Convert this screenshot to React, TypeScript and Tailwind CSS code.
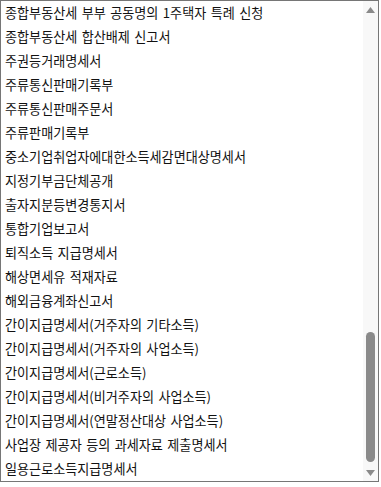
import React from 'react';

const items = [
    '종합부동산세 부부 공동명의 1주택자 특례 신청',
    '종합부동산세 합산배제 신고서',
    '주권등거래명세서',
    '주류통신판매기록부',
    '주류통신판매주문서',
    '주류판매기록부',
    '중소기업취업자에대한소득세감면대상명세서',
    '지정기부금단체공개',
    '출자지분등변경통지서',
    '통합기업보고서',
    '퇴직소득 지급명세서',
    '해상면세유 적재자료',
    '해외금융계좌신고서',
    '간이지급명세서(거주자의 기타소득)',
    '간이지급명세서(거주자의 사업소득)',
    '간이지급명세서(근로소득)',
    '간이지급명세서(비거주자의 사업소득)',
    '간이지급명세서(연말정산대상 사업소득)',
    '사업장 제공자 등의 과세자료 제출명세서',
    '일용근로소득지급명세서',
];

export default function App() {
    return (
        <div className="w-[381px] h-[487px] bg-white">
            <div
                className="w-[379px] h-[482px] border border-[#767676] flex overflow-hidden bg-white"
                style={{ fontFamily: '"Noto Sans CJK KR", "Noto Sans", sans-serif' }}
            >
                <ul className="flex-1 flex flex-col">
                    {items.map((item) => (
                        <li key={item} className="h-[24px] flex items-center px-[4px] text-[13.1px] text-[#111] [word-spacing:1.5px] whitespace-nowrap">
                            {item}
                        </li>
                    ))}
                </ul>
                {/* scrollbar */}
                <div className="w-[15px] bg-[#f8f8f8] flex flex-col items-center">
                    <div className="h-[17px] flex items-center justify-center">
                        <svg width="9" height="6" viewBox="0 0 9 6"><path d="M4.5 0L9 6H0z" fill="#8a8a8a" /></svg>
                    </div>
                    <div className="flex-1 w-full flex flex-col items-center">
                        <div className="mt-auto mb-[2px] w-[9px] h-[130px] rounded-full bg-[#8a8a8a]" />
                    </div>
                    <div className="h-[17px] flex items-center justify-center">
                        <svg width="9" height="6" viewBox="0 0 9 6"><path d="M0 0H9L4.5 6z" fill="#8a8a8a" /></svg>
                    </div>
                </div>
            </div>
        </div>
    );
}
